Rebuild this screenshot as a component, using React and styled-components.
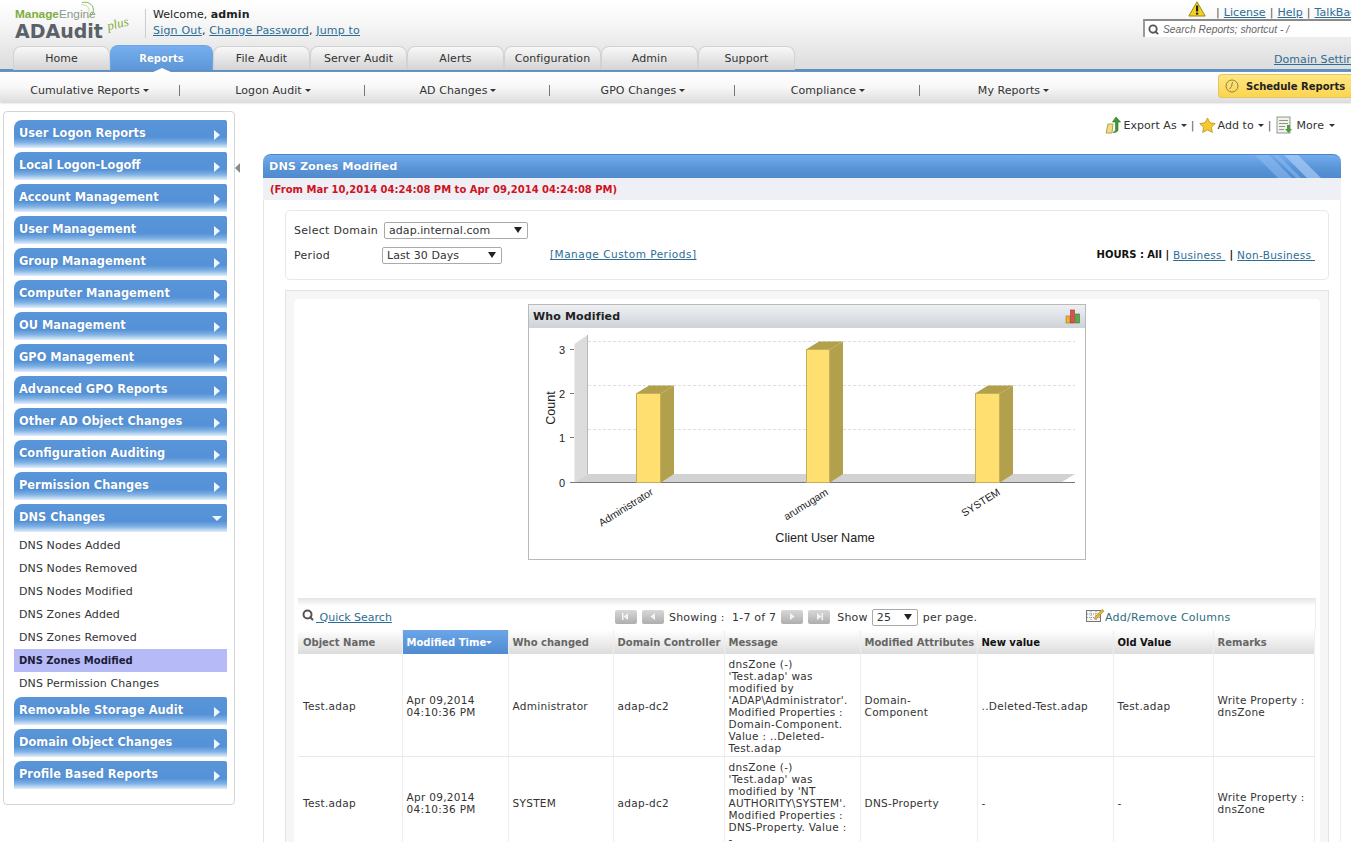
import React from 'react';
import styled, { createGlobalStyle } from 'styled-components';
import { Search } from 'lucide-react';

const GlobalStyle = createGlobalStyle`
  html, body { margin: 0; padding: 0; background: #fff; }
  body { font-family: "DejaVu Sans", Verdana, sans-serif; font-size: 11px; color: #333; }
  * { box-sizing: border-box; }
`;

const tabs = ['Home', 'Reports', 'File Audit', 'Server Audit', 'Alerts', 'Configuration', 'Admin', 'Support'];
const subMenus = ['Cumulative Reports', 'Logon Audit', 'AD Changes', 'GPO Changes', 'Compliance', 'My Reports'];
const groupsTop = [
  'User Logon Reports', 'Local Logon-Logoff', 'Account Management', 'User Management', 'Group Management',
  'Computer Management', 'OU Management', 'GPO Management', 'Advanced GPO Reports', 'Other AD Object Changes',
  'Configuration Auditing', 'Permission Changes',
];
const dnsItems = ['DNS Nodes Added', 'DNS Nodes Removed', 'DNS Nodes Modified', 'DNS Zones Added', 'DNS Zones Removed', 'DNS Zones Modified', 'DNS Permission Changes'];
const groupsBottom = ['Removable Storage Audit', 'Domain Object Changes', 'Profile Based Reports'];

const columns = [
  { title: 'Object Name', width: 104 },
  { title: 'Modified Time', width: 106, sorted: true },
  { title: 'Who changed', width: 105 },
  { title: 'Domain Controller', width: 111 },
  { title: 'Message', width: 136 },
  { title: 'Modified Attributes', width: 117 },
  { title: 'New value', width: 136, strong: true },
  { title: 'Old Value', width: 100, strong: true },
  { title: 'Remarks', width: 101 },
];

const rows = [
  ['Test.adap', 'Apr 09,2014\n04:10:36 PM', 'Administrator', 'adap-dc2',
    "dnsZone (-)\n'Test.adap' was\nmodified by\n'ADAP\\Administrator'.\nModified Properties :\nDomain-Component.\nValue : ..Deleted-\nTest.adap",
    'Domain-\nComponent', '..Deleted-Test.adap', 'Test.adap', 'Write Property :\ndnsZone'],
  ['Test.adap', 'Apr 09,2014\n04:10:36 PM', 'SYSTEM', 'adap-dc2',
    "dnsZone (-)\n'Test.adap' was\nmodified by 'NT\nAUTHORITY\\SYSTEM'.\nModified Properties :\nDNS-Property. Value :\n-",
    'DNS-Property', '-', '-', 'Write Property :\ndnsZone'],
];

const Page = styled.div`
  width: 1351px;
  height: 842px;
  overflow: hidden;
  display: flex;
  flex-direction: column;
  letter-spacing: 0.06px;
`;

const Header = styled.header`
  height: 72px;
  flex: none;
  background: linear-gradient(#fff, #f6f6f6 35%, #dcdcdc);
  border-bottom: 3px solid #5f90bf;
  display: flex;
  flex-direction: column;
`;

const TopRow = styled.div`
  height: 45px;
  flex: none;
  display: flex;
`;

const Logo = styled.div`
  position: relative;
  width: 146px;
  padding: 8px 0 0 15px;
  flex: none;
`;

const LogoMaker = styled.div`
  font-family: "Liberation Sans", Arial, sans-serif;
  font-size: 11.8px;
  line-height: 13px;
  letter-spacing: 0;
  color: #7fae3c;
  b { font-weight: bold; }
  span { color: #8a9a8a; font-weight: normal; }
`;

const LogoName = styled.div`
  font-family: "DejaVu Sans", Verdana, sans-serif;
  font-size: 19px;
  line-height: 20px;
  font-weight: bold;
  letter-spacing: 0;
  color: #5a6269;
`;

const LogoPlus = styled.span`
  position: absolute;
  left: 107px;
  top: 16px;
  font-family: "Liberation Serif", serif;
  font-style: italic;
  font-size: 13px;
  letter-spacing: 0;
  color: #7fae3c;
  transform: rotate(-14deg);
`;

const LogoArc = styled.svg`
  position: absolute;
  left: 80px;
  top: 1px;
`;

const Welcome = styled.div`
  border-left: 1px solid #ccc;
  margin-top: 9px;
  height: 29px;
  padding-left: 7px;
  line-height: 16px;
  margin-left: -1px;
  color: #222;
`;

const WelcomeLine = styled.div`
  height: 16px;
  margin-top: -2px;
  & + & { margin-top: 0; letter-spacing: 0.18px; }
`;

const HeaderLink = styled.a`
  color: #2c6d96;
  text-decoration: underline;
`;

const HeaderRight = styled.div`
  margin-left: auto;
  width: 208px;
  flex: none;
  overflow: hidden;
`;

const TopLinks = styled.div`
  height: 19px;
  padding: 1px 0 0 45px;
  display: flex;
  align-items: flex-start;
  gap: 4px;
  white-space: nowrap;
  line-height: 23px;
`;

const Bar = styled.span`
  color: #555;
`;

const WarnIcon = styled.svg`
  margin-right: 6px;
  flex: none;
`;

const SearchBox = styled.div`
  height: 18px;
  border-top: 2px solid #8a8a8a;
  border-left: 2px solid #9a9a9a;
  background: #fff;
  display: flex;
  align-items: center;
  gap: 4px;
  padding-left: 3px;
  font-family: "Liberation Sans", Arial, sans-serif;
  font-style: italic;
  font-size: 10.2px;
  color: #666;
  svg { color: #555; flex: none; }
`;

const TabRow = styled.nav`
  flex: 1;
  display: flex;
  padding-left: 13px;
  align-items: flex-end;
`;

const Tab = styled.div`
  width: ${(p) => (p.$active ? 103 : 97)}px;
  height: ${(p) => (p.$active ? 25 : 24)}px;
  position: relative;
  flex: none;
  display: flex;
  align-items: center;
  justify-content: center;
  padding-top: ${(p) => (p.$active ? 1 : 0)}px;
  border: 1px solid ${(p) => (p.$active ? '#6da6e6' : '#d2d2d2')};
  border-bottom: none;
  border-radius: 8px 8px 0 0;
  background: ${(p) => (p.$active ? 'linear-gradient(#76aeef, #5d97d8)' : 'linear-gradient(#f8f8f8, #d4d4d4)')};
  color: ${(p) => (p.$active ? '#fff' : '#333')};
  font-size: ${(p) => (p.$active ? 10 : 11)}px;
  font-weight: ${(p) => (p.$active ? 'bold' : 'normal')};
  text-shadow: ${(p) => (p.$active ? '0 0 1px #4a7fb8' : 'none')};
`;

const TabNotch = styled.span`
  position: absolute;
  left: 50%;
  bottom: -3px;
  margin-left: -11px;
  border: 11px solid transparent;
  border-top: none;
  border-bottom: 5px solid #fff;
`;

const DomainLink = styled(HeaderLink)`
  margin-left: auto;
  width: 77px;
  white-space: nowrap;
  overflow: hidden;
  padding-bottom: 4px;
`;

const SubNav = styled.div`
  height: 30px;
  flex: none;
  display: flex;
  align-items: center;
  background: linear-gradient(#fff, #f8f8f8 50%, #dedede);
  box-shadow: 0 1px 2px #ccc;
`;

const SubItem = styled.div`
  width: ${(p) => (p.$first ? 180 : 185)}px;
  flex: none;
  margin-top: 6px;
  text-align: center;
  padding-left: ${(p) => (p.$first ? 0 : 2)}px;
  ${(p) => (p.$last ? '' : 'border-right: 1px solid #777;')}
  height: 11px;
  line-height: 11px;
  color: #333;
  white-space: nowrap;
`;

const Caret = styled.span`
  display: inline-block;
  width: 0;
  height: 0;
  margin-left: ${(p) => p.$gap ?? 3}px;
  vertical-align: 2px;
  border: 3px solid transparent;
  border-top: 3px solid ${(p) => p.$color || '#333'};
  border-bottom: none;
`;

const ScheduleButton = styled.div`
  margin-left: auto;
  width: 133px;
  height: 24px;
  margin-top: -2px;
  flex: none;
  display: flex;
  align-items: center;
  gap: 6px;
  padding-left: 5px;
  border: 1px solid #e6c65c;
  border-right: none;
  border-radius: 4px 0 0 4px;
  background: linear-gradient(#ffe684, #fbd551);
  font-size: 10px;
  font-weight: bold;
  letter-spacing: 0;
  color: #222;
  white-space: nowrap;
  svg { flex: none; }
`;

const Body = styled.div`
  flex: 1;
  min-height: 0;
  display: flex;
  align-items: flex-start;
`;

const Sidebar = styled.aside`
  position: relative;
  width: 232px;
  margin: 9px 0 0 3px;
  padding: 8px 7px 11px 10px;
  flex: none;
  border: 1px solid #d4d4d4;
  border-radius: 4px;
  background: #fff;
`;

const Handle = styled.div`
  position: absolute;
  right: -7px;
  top: 43px;
  width: 6px;
  height: 26px;
  display: flex;
  align-items: center;
  background: #fff;
  clip-path: polygon(0 0, 100% 40%, 100% 60%, 0 100%);
  &::after {
    content: '';
    border: 5px solid transparent;
    border-left: none;
    border-right: 5px solid #8a8a8a;
  }
`;

const Group = styled.div`
  height: 28px;
  margin-bottom: 4px;
  display: flex;
  align-items: center;
  justify-content: space-between;
  padding: 0 7px 2px 5px;
  border-radius: 8px 2px 0 0;
  background: linear-gradient(#5a95d9, #5491d6 62%, #7eb0e4 80%, #e2eefa);
  color: #fff;
  font-size: 11.4px;
  font-weight: bold;
  letter-spacing: 0;
  text-shadow: 0 0 1px #3f72aa;
  white-space: nowrap;
`;

const Arrow = styled.span`
  width: 0;
  height: 0;
  margin-top: 3px;
  ${(p) =>
    p.$open
      ? 'border-left: 5px solid transparent; border-right: 5px solid transparent; border-top: 5px solid #f0f6fd; margin-right: -2px;'
      : 'border-top: 5px solid transparent; border-bottom: 5px solid transparent; border-left: 6px solid #f0f6fd;'}
`;

const SubList = styled.div`
  margin: -2px 0 2px;
`;

const SubLink = styled.div`
  height: 23px;
  line-height: 23px;
  padding-left: 5px;
  color: ${(p) => (p.$active ? '#1c1c3a' : '#333')};
  font-size: ${(p) => (p.$active ? 10 : 11)}px;
  font-weight: ${(p) => (p.$active ? 'bold' : 'normal')};
  background: ${(p) => (p.$active ? '#b6baf6' : 'transparent')};
  letter-spacing: ${(p) => (p.$active ? '0' : '0.1px')};
`;

const Main = styled.main`
  width: 1078px;
  margin-left: 28px;
  flex: none;
`;

const Actions = styled.div`
  height: 52px;
  padding: 0 6px 6px 0;
  display: flex;
  justify-content: flex-end;
  align-items: center;
  gap: 4px;
  white-space: nowrap;
  color: #333;
`;

const ActionItem = styled.span`
  display: inline-flex;
  align-items: center;
  gap: 2px;
`;

const ReportSvg = styled.svg`
  margin: 0 1px 0 1px;
`;

const TitleBar = styled.div`
  position: relative;
  height: 24px;
  padding: 0 0 1px 6px;
  display: flex;
  align-items: center;
  border-radius: 8px 8px 0 0;
  border-top: 1px solid #4b86c8;
  background: linear-gradient(#72acef, #5a95d8 55%, #4f8ace);
  color: #fff;
  font-size: 11.3px;
  font-weight: bold;
  letter-spacing: 0;
  text-shadow: 0 0 1px #3f72aa;
  overflow: hidden;
`;

const TitleStripes = styled.svg`
  position: absolute;
  right: 0;
  top: 0;
`;

const DateStrip = styled.div`
  height: 22px;
  padding-left: 7px;
  display: flex;
  align-items: center;
  background: #eef0f6;
  color: #d0121e;
  font-size: 10px;
  font-weight: bold;
  letter-spacing: 0;
`;

const Panel = styled.div`
  height: 642px;
  padding: 10px 11px 0 21px;
  border-left: 1px solid #e6e6e6;
  border-right: 1px solid #eee;
  overflow: hidden;
`;

const FilterBox = styled.div`
  height: 70px;
  padding: 6px 13px 0 8px;
  border: 1px solid #e8e8e8;
  border-radius: 5px;
  display: grid;
  grid-template-columns: 90px 1fr;
  grid-template-rows: 26px 24px;
  align-content: start;
`;

const FilterLabel = styled.div`
  display: flex;
  align-items: center;
  color: #333;
  letter-spacing: 0.3px;
`;

const FilterRow = styled.div`
  display: flex;
  align-items: center;
`;

const FakeSelect = styled.div`
  width: ${(p) => p.$width}px;
  height: 17px;
  margin-left: ${(p) => p.$offset || 0}px;
  padding: 0 0 0 4px;
  display: flex;
  align-items: center;
  justify-content: space-between;
  border: 1px solid #aaa;
  border-radius: 2px;
  background: #fff;
  color: #333;
  flex: none;
  &::after {
    content: '';
    margin-right: 5px;
    border: 4px solid transparent;
    border-top: 6px solid #222;
    border-bottom: none;
  }
`;

const CustomLink = styled(HeaderLink)`
  margin: -2px 0 0 48px;
  font-size: 10.5px;
  letter-spacing: 0.5px;
`;

const Hours = styled.div`
  margin-left: auto;
  display: flex;
  gap: 4px;
  font-size: 10px;
  font-weight: bold;
  color: #111;
  letter-spacing: 0;
  white-space: pre;
  a { font-size: 10.5px; font-weight: normal; letter-spacing: 0.3px; }
`;

const ReportBox = styled.div`
  margin-top: 10px;
  padding: 8px;
  height: 600px;
  border: 1px solid #e4e4e4;
  background: #f6f6f6;
`;

const ReportInner = styled.div`
  height: 100%;
  padding: 5px 4px 0 4px;
  background: #fff;
  border-radius: 5px;
  display: flex;
  flex-direction: column;
`;

const ChartCard = styled.section`
  width: 558px;
  height: 256px;
  margin-left: 230px;
  flex: none;
  border: 1px solid #b9b9b9;
  display: flex;
  flex-direction: column;
`;

const ChartHead = styled.div`
  height: 23px;
  flex: none;
  display: flex;
  align-items: center;
  justify-content: space-between;
  padding: 0 4px;
  background: linear-gradient(#eef0f3, #ced3d9);
  font-weight: bold;
  color: #222;
  letter-spacing: 0.15px;
`;

const TableTools = styled.div`
  margin-top: 38px;
  height: 32px;
  flex: none;
  position: relative;
  display: flex;
  align-items: center;
  padding: 6px 0 0 4px;
  background: linear-gradient(#e4e4e4, #fff 8px);
  border-right: 1px solid #eee;
`;

const QuickSearch = styled.div`
  width: 313px;
  display: flex;
  align-items: center;
  gap: 2px;
  white-space: pre;
  a { letter-spacing: 0; }
  svg { color: #555; flex: none; margin-top: -4px; }
`;

const Pager = styled.div`
  display: flex;
  align-items: center;
  gap: 5px;
  color: #333;
  letter-spacing: 0.2px;
  white-space: pre;
`;

const PagerShow = styled.span`
  margin-left: 2px;
`;

const PageBtn = styled.span`
  width: 22px;
  height: 14px;
  display: flex;
  align-items: center;
  justify-content: center;
  border-radius: 2px;
  background: linear-gradient(#d8d8d8, #aeaeae);
  margin-top: -1px;
`;

const ColumnsLink = styled.a`
  position: absolute;
  left: 788px;
  top: 10px;
  display: flex;
  align-items: flex-end;
  color: #2c6d80;
  letter-spacing: 0.25px;
  svg { margin-bottom: 1px; }
`;

const Table = styled.table`
  width: 1016px;
  border-collapse: collapse;
  table-layout: fixed;
`;

const Th = styled.th`
  height: 24px;
  padding: 0 4px;
  text-align: left;
  border-right: 1px solid #eee;
  white-space: nowrap;
  font-size: 10px;
  letter-spacing: 0;
  background: ${(p) => (p.$sorted ? 'linear-gradient(#6aa5e8, #4f8ccf)' : 'linear-gradient(#fff, #dcdcdc)')};
  color: ${(p) => (p.$sorted ? '#fff' : p.$strong ? '#111' : '#666')};
  &:first-child { padding-left: 5px; }
`;

const Td = styled.td`
  padding: 4px 4px 2px;
  line-height: 12px;
  border-right: 1px solid #eee;
  border-bottom: 1px solid #e8e8e8;
  white-space: pre-line;
  color: #333;
  font-size: 10.5px;
  letter-spacing: 0.3px;
  vertical-align: middle;
  overflow: hidden;
  &:first-child { padding-left: 5px; }
`;

const Icon = {
  Warning: () => (
    <WarnIcon width="18" height="16" viewBox="0 0 18 16">
      <path d="M9 .8 17.2 15H.8Z" fill="#f3d21f" stroke="#9a8a1a" strokeWidth="1" strokeLinejoin="round" />
      <rect x="8" y="4.5" width="2.2" height="6" fill="#222" />
      <rect x="8" y="11.6" width="2.2" height="2" fill="#222" />
    </WarnIcon>
  ),
  Clock: () => (
    <svg width="16" height="16" viewBox="0 0 16 16">
      <circle cx="8" cy="8" r="6" fill="none" stroke="#8f7f45" strokeWidth="1" />
      <path d="M8.5 4 7.5 8.5 5.5 11" fill="none" stroke="#8f7f45" strokeWidth="1" />
    </svg>
  ),
  Export: () => (
    <svg width="16" height="18" viewBox="0 0 16 18">
      <path d="M1 17 3 8h5l-1 9Z" fill="#f0dd8a" stroke="#b8a050" strokeWidth="1" />
      <path d="M11 1 15.5 6H13v8c0 1.5-2 2.5-5 2.5 2-1 2.5-2 2.5-3V6H7.5Z" fill="#3f9a35" stroke="#2a7424" strokeWidth=".6" />
    </svg>
  ),
  Star: () => (
    <svg width="17" height="16" viewBox="0 0 17 16">
      <path d="M8.5 1 11 5.8l5.2.8-3.8 3.6.9 5.2-4.8-2.5-4.8 2.5.9-5.2L.8 6.6 6 5.8Z" fill="#f8c92c" stroke="#b89324" strokeWidth=".8" strokeLinejoin="round" />
    </svg>
  ),
  Report: () => (
    <ReportSvg width="17" height="18" viewBox="0 0 17 18">
      <rect x="1" y="1" width="13" height="16" fill="#f2f2ea" stroke="#8a9a8a" />
      <path d="M3 4.5h9M3 7.5h9M3 10.5h6M3 13.5h5" stroke="#8a9a8a" />
      <path d="M11 9h3v4h2l-3.5 4L9 13h2Z" fill="#4f9c3a" />
    </ReportSvg>
  ),
  Bars: () => (
    <svg width="16" height="15" viewBox="0 0 16 15">
      <rect x="1" y="7" width="4" height="7" fill="#e8b23a" stroke="#a07820" strokeWidth=".6" />
      <rect x="5.5" y="1" width="4" height="13" fill="#d9534a" stroke="#96342c" strokeWidth=".6" />
      <rect x="10.5" y="5" width="4" height="9" fill="#5fa84a" stroke="#3c7a2e" strokeWidth=".6" />
    </svg>
  ),
  Columns: () => (
    <svg width="19" height="15" viewBox="0 0 19 15">
      <rect x=".5" y="2.5" width="14" height="11" fill="#f4f4f4" stroke="#777" />
      <path d="M5 3v10M10 3v10M1 6h13M1 9.5h13" stroke="#999" strokeDasharray="1 1" />
      <path d="M9 9 16 1.5l2 1.5-7 7.5-2.5.6Z" fill="#e9b93a" stroke="#9b7a20" strokeWidth=".6" />
    </svg>
  ),
};

const PagerArrow = ({ dir, stop }) => (
  <svg width="10" height="9" viewBox="0 0 10 9">
    {dir === 'left' ? <path d="M7 1v7L2.5 4.5Z" fill="#f4f4f4" /> : <path d="M3 1v7l4.5-3.5Z" fill="#f4f4f4" />}
    {stop && <rect x={dir === 'left' ? 1 : 7.5} y="1" width="1.5" height="7" fill="#f4f4f4" />}
  </svg>
);

const bars = [
  { x: 636, w: 25, top: 393.5, label: 'Administrator', lx: 654 },
  { x: 806, w: 24, top: 349.5, label: 'arumugam', lx: 829 },
  { x: 975, w: 25, top: 393.5, label: 'SYSTEM', lx: 1001 },
];

const ChartText = styled.text`
  font-family: "Liberation Sans", Arial, sans-serif;
  font-size: ${(p) => p.$size || 11}px;
  fill: #222;
  letter-spacing: 0;
`;

const Chart = () => (
  <svg width="556" height="231" viewBox="529 328 556 231">
    <path d="M574.5 482 587.5 474V335L574.5 344Z" fill="#dcdcdc" />
    <path d="M574.5 482 587.5 474H1075L1062 482Z" fill="#d2d2d2" />
    <path d="M587.5 335V474" stroke="#b8b8b8" />
    {[341.5, 385.5, 429.5].map((y) => (
      <path key={y} d={`M588 ${y}H1075`} stroke="#dedede" strokeDasharray="3 2" />
    ))}
    <path d="M570 482.5H1075" stroke="#777" />
    {[[3, 349.5], [2, 393.5], [1, 437.5], [0, 482.5]].map(([n, y]) => (
      <g key={n}>
        <path d={`M570 ${y}H574`} stroke="#777" />
        <ChartText x="565" y={y + 4} textAnchor="end">{n}</ChartText>
      </g>
    ))}
    <ChartText x="0" y="0" $size={12.6} textAnchor="middle" transform="translate(555 408) rotate(-90)">Count</ChartText>
    {bars.map((b) => (
      <g key={b.label}>
        <path d={`M${b.x} ${b.top}l13 -8h${b.w}l-13 8Z`} fill="#b3a04d" />
        <path d={`M${b.x + b.w} ${b.top}l13 -8V474l-13 8.5Z`} fill="#b3a04d" />
        <rect x={b.x + 0.5} y={b.top} width={b.w - 1} height={482.5 - b.top} fill="#fedf70" stroke="#c4b05c" />
        <ChartText x={b.lx} y="494" $size={10.5} textAnchor="end" transform={`rotate(-32 ${b.lx} 494)`}>{b.label}</ChartText>
      </g>
    ))}
    <ChartText x="825" y="542" $size={12.6} textAnchor="middle">Client User Name</ChartText>
  </svg>
);

const SideGroup = ({ label, open }) => (
  <Group>
    {label}
    <Arrow $open={open} />
  </Group>
);

export default function App() {
  return (
    <Page>
      <GlobalStyle />
      <Header>
        <TopRow>
          <Logo>
            <LogoArc width="20" height="20" viewBox="0 0 20 20">
              <path d="M2 1.5c7-1.500 13 3 11 10-1 2.500-2.500 4-5 5" fill="none" stroke="#8db85a" strokeWidth="1" />
              <path d="M1 4c5-1 9 2 8 7" fill="none" stroke="#c5d9a5" strokeWidth="1" />
            </LogoArc>
            <LogoMaker><b>Manage</b><span>Engine</span></LogoMaker>
            <LogoName>ADAudit</LogoName>
            <LogoPlus>plus</LogoPlus>
          </Logo>
          <Welcome>
            <WelcomeLine>Welcome, <b>admin</b></WelcomeLine>
            <WelcomeLine>
              <HeaderLink>Sign Out</HeaderLink>, <HeaderLink>Change Password</HeaderLink>, <HeaderLink>Jump to</HeaderLink>
            </WelcomeLine>
          </Welcome>
          <HeaderRight>
            <TopLinks>
              <Icon.Warning />
              <Bar>|</Bar><HeaderLink>License</HeaderLink>
              <Bar>|</Bar><HeaderLink>Help</HeaderLink>
              <Bar>|</Bar><HeaderLink>TalkBack</HeaderLink>
            </TopLinks>
            <SearchBox>
              <Search size={11} strokeWidth={4} />
              Search Reports; shortcut - /
            </SearchBox>
          </HeaderRight>
        </TopRow>
        <TabRow>
          {tabs.map((t) => (
            <Tab key={t} $active={t === 'Reports'}>
              {t}
              {t === 'Reports' && <TabNotch />}
            </Tab>
          ))}
          <DomainLink>Domain Settings</DomainLink>
        </TabRow>
      </Header>

      <SubNav>
        {subMenus.map((s, i) => (
          <SubItem key={s} $first={i === 0} $last={i === subMenus.length - 1}>
            {s}<Caret />
          </SubItem>
        ))}
        <ScheduleButton>
          <Icon.Clock />
          Schedule Reports
        </ScheduleButton>
      </SubNav>

      <Body>
        <Sidebar>
          <Handle />
          {groupsTop.map((g) => <SideGroup key={g} label={g} />)}
          <SideGroup label="DNS Changes" open />
          <SubList>
            {dnsItems.map((d) => (
              <SubLink key={d} $active={d === 'DNS Zones Modified'}>{d}</SubLink>
            ))}
          </SubList>
          {groupsBottom.map((g) => <SideGroup key={g} label={g} />)}
        </Sidebar>

        <Main>
          <Actions>
            <ActionItem><Icon.Export />Export As<Caret $gap={2} /></ActionItem>
            <Bar>|</Bar>
            <ActionItem><Icon.Star />Add to<Caret $gap={2} /></ActionItem>
            <Bar>|</Bar>
            <ActionItem><Icon.Report />More<Caret $gap={3} /></ActionItem>
          </Actions>
          <TitleBar>
            DNS Zones Modified
            <TitleStripes width="90" height="24" viewBox="0 0 90 24">
              <path d="M4 0h14l24 24H28Z" fill="#8fbdf0" opacity=".55" />
              <path d="M22 0h5l24 24h-5Z" fill="#8fbdf0" opacity=".55" />
              <path d="M33 0h14l24 24H57Z" fill="#a8ccf4" opacity=".7" />
            </TitleStripes>
          </TitleBar>
          <DateStrip>(From Mar 10,2014 04:24:08 PM to Apr 09,2014 04:24:08 PM)</DateStrip>
          <Panel>
            <FilterBox>
              <FilterLabel>Select Domain</FilterLabel>
              <FilterRow>
                <FakeSelect $width={144}>adap.internal.com</FakeSelect>
              </FilterRow>
              <FilterLabel>Period</FilterLabel>
              <FilterRow>
                <FakeSelect $width={120} $offset={-2}>Last 30 Days</FakeSelect>
                <CustomLink>[Manage Custom Periods]</CustomLink>
                <Hours>
                  HOURS : All |<HeaderLink>Business </HeaderLink>|<HeaderLink>Non-Business </HeaderLink>
                </Hours>
              </FilterRow>
            </FilterBox>

            <ReportBox>
              <ReportInner>
                <ChartCard>
                  <ChartHead>
                    Who Modified
                    <Icon.Bars />
                  </ChartHead>
                  <Chart />
                </ChartCard>

                <TableTools>
                  <QuickSearch>
                    <Search size={12} strokeWidth={4} />
                    <HeaderLink> Quick Search</HeaderLink>
                  </QuickSearch>
                  <Pager>
                    <PageBtn><PagerArrow dir="left" stop /></PageBtn>
                    <PageBtn><PagerArrow dir="left" /></PageBtn>
                    {'Showing :  1-7 of 7'}
                    <PageBtn><PagerArrow dir="right" /></PageBtn>
                    <PageBtn><PagerArrow dir="right" stop /></PageBtn>
                    <PagerShow>Show</PagerShow>
                    <FakeSelect $width={46} $offset={-1}>25</FakeSelect>
                    per page.
                  </Pager>
                  <ColumnsLink><Icon.Columns />Add/Remove Columns</ColumnsLink>
                </TableTools>

                <Table>
                  <colgroup>
                    {columns.map((c) => <col key={c.title} style={{ width: c.width }} />)}
                  </colgroup>
                  <thead>
                    <tr>
                      {columns.map((c) => (
                        <Th key={c.title} $sorted={c.sorted} $strong={c.strong}>
                          {c.title}{c.sorted && <Caret $color="#fff" $gap={0} />}
                        </Th>
                      ))}
                    </tr>
                  </thead>
                  <tbody>
                    {rows.map((r, i) => (
                      <tr key={i}>
                        {r.map((cell, j) => <Td key={j}>{cell}</Td>)}
                      </tr>
                    ))}
                  </tbody>
                </Table>
              </ReportInner>
            </ReportBox>
          </Panel>
        </Main>
      </Body>
    </Page>
  );
}
